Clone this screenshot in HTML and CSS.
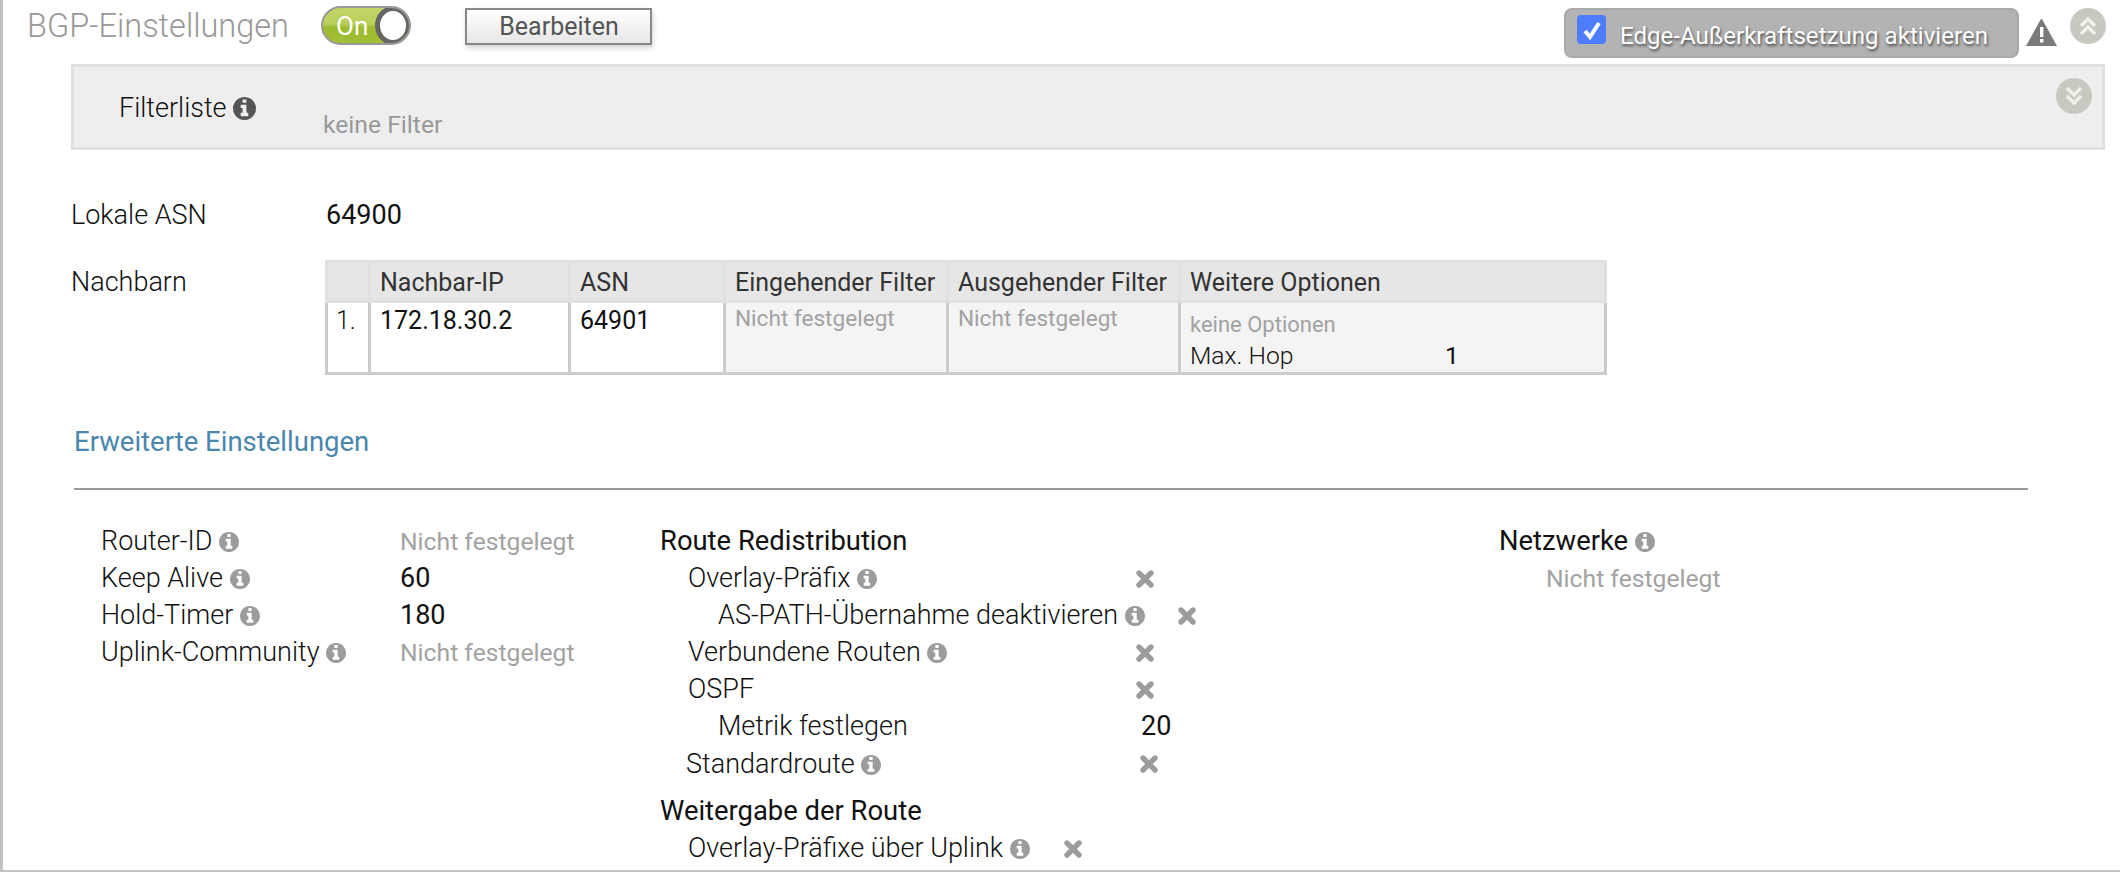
FILE: index.html
```html
<!DOCTYPE html>
<html lang="de">
<head>
<meta charset="utf-8">
<title>BGP-Einstellungen</title>
<link rel="stylesheet" href="styles.css">
</head>
<body>
<svg class="defs" width="0" height="0" aria-hidden="true">
  <symbol id="i-info" viewBox="0 0 1536 1536"><path d="M1024 1248v-160q0-14-9-23t-23-9h-96v-512q0-14-9-23t-23-9h-320q-14 0-23 9t-9 23v160q0 14 9 23t23 9h96v320h-96q-14 0-23 9t-9 23v160q0 14 9 23t23 9h448q14 0 23-9t9-23zm-128-896v-160q0-14-9-23t-23-9h-192q-14 0-23 9t-9 23v160q0 14 9 23t23 9h192q14 0 23-9t9-23zm640 416q0 209-103 385.5t-279.5 279.5-385.5 103-385.5-103-279.5-279.5-103-385.5 103-385.5 279.5-279.5 385.5-103 385.5 103 279.5 279.5 103 385.5z"/></symbol>
  <symbol id="i-x" viewBox="0 0 20 20"><path d="M4 4l12 12M16 4L4 16" fill="none" stroke="currentColor" stroke-width="5.4" stroke-linecap="round"/></symbol>
</svg>
<main class="page">
  <header class="top">
    <h1 class="title">BGP-Einstellungen</h1>
    <div class="toggle"><span class="toggle-label">On</span><span class="knob"></span></div>
    <button class="btn" type="button">Bearbeiten</button>
    <div class="override">
      <span class="check"><svg viewBox="0 0 24 24" width="24" height="24"><path d="M5 13l5 6 9-14" fill="none" stroke="#fff" stroke-width="4"/></svg></span>
      <span class="override-text">Edge-Außerkraftsetzung aktivieren</span>
    </div>
    <svg class="warn" viewBox="0 0 31 28" width="31" height="28"><path d="M15.5 1L30.5 28H.5z" fill="#7a7a7a" stroke="#7a7a7a" stroke-linejoin="round"/><path d="M14 9h3.4v10H14zM14 21h3.4v3.6H14z" fill="#fff"/></svg>
    <span class="round"><svg viewBox="0 0 24 24" width="24" height="24"><path d="M5 12l7-7 7 7M5 20l7-7 7 7" fill="none" stroke="#f1f1ec" stroke-width="3.5"/></svg></span>
  </header>

  <section class="filter">
    <div class="filter-label">Filterliste <svg class="info info-dark"><use href="#i-info"/></svg></div>
    <div class="filter-value">keine Filter</div>
    <span class="round round-down"><svg viewBox="0 0 24 24" width="24" height="24"><path d="M5 4l7 7 7-7M5 12l7 7 7-7" fill="none" stroke="#f1f1ec" stroke-width="3.5"/></svg></span>
  </section>

  <section class="basic">
    <div class="field">Lokale ASN</div>
    <div class="val">64900</div>
    <div class="field neighbors-label">Nachbarn</div>
    <table class="grid">
      <colgroup><col class="c1"><col class="c2"><col class="c3"><col class="c4"><col class="c5"><col class="c6"></colgroup>
      <thead>
        <tr><th></th><th>Nachbar-IP</th><th>ASN</th><th>Eingehender Filter</th><th>Ausgehender Filter</th><th>Weitere Optionen</th></tr>
      </thead>
      <tbody>
        <tr>
          <td class="idx">1.</td><td>172.18.30.2</td><td>64901</td>
          <td class="off muted">Nicht festgelegt</td>
          <td class="off muted">Nicht festgelegt</td>
          <td class="off">
            <div class="muted opt-none">keine Optionen</div>
            <div class="opt-row"><span class="opt-name">Max. Hop</span><span>1</span></div>
          </td>
        </tr>
      </tbody>
    </table>
  </section>

  <h2 class="adv-title">Erweiterte Einstellungen</h2>
  <hr class="rule">

  <section class="adv">
    <div class="col-a">
      <div class="lbl">Router-ID <svg class="info"><use href="#i-info"/></svg></div><div class="muted-l">Nicht festgelegt</div>
      <div class="lbl">Keep Alive <svg class="info"><use href="#i-info"/></svg></div><div class="num">60</div>
      <div class="lbl">Hold-Timer <svg class="info"><use href="#i-info"/></svg></div><div class="num">180</div>
      <div class="lbl">Uplink-Community <svg class="info"><use href="#i-info"/></svg></div><div class="muted-l">Nicht festgelegt</div>
    </div>
    <div class="col-b">
      <div class="head">Route Redistribution</div>
      <div class="row ind1"><span class="lbl lbl-w1">Overlay-Präfix <svg class="info"><use href="#i-info"/></svg></span><svg class="x"><use href="#i-x"/></svg></div>
      <div class="row ind2"><span class="lbl lbl-w2">AS-PATH-Übernahme deaktivieren <svg class="info"><use href="#i-info"/></svg></span><svg class="x"><use href="#i-x"/></svg></div>
      <div class="row ind1"><span class="lbl lbl-w1">Verbundene Routen <svg class="info"><use href="#i-info"/></svg></span><svg class="x"><use href="#i-x"/></svg></div>
      <div class="row ind1"><span class="lbl lbl-w1">OSPF</span><svg class="x"><use href="#i-x"/></svg></div>
      <div class="row ind2"><span class="lbl lbl-w3">Metrik festlegen</span><span class="num">20</span></div>
      <div class="row ind0"><span class="lbl lbl-w4">Standardroute <svg class="info"><use href="#i-info"/></svg></span><svg class="x"><use href="#i-x"/></svg></div>
      <div class="head head-2">Weitergabe der Route</div>
      <div class="row ind1"><span class="lbl lbl-w5">Overlay-Präfixe über Uplink <svg class="info"><use href="#i-info"/></svg></span><svg class="x"><use href="#i-x"/></svg></div>
    </div>
    <div class="col-c">
      <div class="head">Netzwerke <svg class="info"><use href="#i-info"/></svg></div>
      <div class="muted-l net-none">Nicht festgelegt</div>
    </div>
  </section>
</main>
</body>
</html>
```
FILE: styles.css
```css
* { box-sizing: border-box; }
html, body { margin: 0; padding: 0; }
body {
  width: 2120px;
  height: 872px;
  overflow: hidden;
  background: #fff;
  font-family: Roboto, "Liberation Sans", sans-serif;
  color: #111;
}
.defs { position: absolute; }
.page {
  height: 872px;
  border-left: 3px solid #c2c2c2;
  border-bottom: 2px solid #c2c2c2;
  padding-left: 24px;
  overflow: hidden;
}

/* top bar */
.top {
  display: flex;
  align-items: flex-start;
  height: 64px;
}
.title {
  margin: 7px 0 0;
  width: 294px;
  font-size: 32.5px;
  line-height: 38px;
  font-weight: 300;
  color: #999;
  white-space: nowrap;
}
.toggle {
  position: relative;
  width: 90px;
  height: 39px;
  margin-top: 6px;
  border: 2px solid #9a9a9a;
  border-radius: 20px;
  background: linear-gradient(#c3d568 0, #b9cf5c 45%, #9dbb2e 55%, #a2bf35 100%);
  overflow: hidden;
}
.toggle-label {
  position: absolute;
  left: 13px;
  top: 4px;
  color: #fff;
  font-size: 26px;
  line-height: 28px;
}
.knob {
  position: absolute;
  right: -2px;
  top: -2px;
  width: 36px;
  height: 39px;
  border: 5px solid #666;
  border-radius: 50%;
  background: #fff;
}
.btn {
  width: 187px;
  height: 37px;
  margin: 8px 0 0 54px;
  padding: 0 0 0 1px;
  border: 2px solid #888;
  background: linear-gradient(#fff, #e6e6e6);
  box-shadow: 1px 3px 5px rgba(0,0,0,.18);
  color: #555;
  font-family: inherit;
  font-size: 25px;
  line-height: 34px;
}
.override {
  display: flex;
  align-items: flex-start;
  width: 455px;
  height: 50px;
  margin: 8px 0 0 912px;
  padding: 5px 0 0 11px;
  background: #b3b3b3;
  border: 2px solid #a9a9a9;
  border-radius: 8px;
}
.check {
  display: flex;
  align-items: center;
  justify-content: center;
  width: 29px;
  height: 29px;
  background: #4d7cff;
  border-radius: 4px;
}
.override-text {
  margin: 6px 0 0 14px;
  color: #fff;
  font-size: 24.1px;
  line-height: 30px;
  white-space: nowrap;
  text-shadow: 1px 2px 3px rgba(0,0,0,.6);
}
.warn { margin: 18px 0 0 7px; flex: none; }
.round {
  display: flex;
  align-items: center;
  justify-content: center;
  flex: none;
  width: 36px;
  height: 36px;
  border-radius: 50%;
  background: #c8c8c0;
  margin: 8px 0 0 13px;
}

/* filter */
.filter {
  position: relative;
  width: 2034px;
  height: 86px;
  margin-left: 44px;
  background: #eee;
  border: 3px solid #e0e0e0;
}
.filter-label {
  position: absolute;
  left: 45px;
  top: 24px;
  font-size: 27px;
  line-height: 34px;
  font-weight: 300;
  display: flex;
  align-items: center;
  gap: 6px;
}
.filter-value {
  position: absolute;
  left: 249px;
  top: 43px;
  font-size: 24.7px;
  line-height: 30px;
  color: #999;
}
.round-down {
  position: absolute;
  left: 1982px;
  top: 11px;
  margin: 0;
}
.info {
  width: 20px;
  height: 20px;
  fill: #9c9c9c;
  flex: none;
  vertical-align: -2px;
}
.info-dark {
  width: 23px;
  height: 23px;
  fill: #555;
}

/* basic */
.basic {
  display: grid;
  grid-template-columns: 255px 1fr;
  padding: 47px 0 0 44px;
  font-size: 27px;
}
.field { font-weight: 300; line-height: 36px; }
.val { line-height: 36px; }
.neighbors-label { margin-top: 31px; }
.grid {
  margin: 27px 0 0 -1px;
  width: 1279px;
  table-layout: fixed;
  border-collapse: collapse;
}
.c1 { width: 43px; }
.c2 { width: 200px; }
.c3 { width: 155px; }
.c4 { width: 223px; }
.c5 { width: 232px; }
.c6 { width: 426px; }
.grid th {
  height: 40px;
  padding: 2px 0 0 9px;
  background: #e6e6e6;
  border: 3px solid #e0e0e0;
  font-size: 25px;
  font-weight: 400;
  text-align: left;
  color: #333;
  white-space: nowrap;
}
.grid td {
  height: 70px;
  padding: 2px 0 0 9px;
  border: 3px solid #ccc;
  vertical-align: top;
  font-size: 25px;
  line-height: 32px;
}
.grid td.idx { padding-left: 8px; font-weight: 300; }
.grid td.off { background: #f4f4f4; }
.grid td.muted { font-size: 22.6px; line-height: 30px; color: #a2a2a2; padding-top: 1px; }
.muted { color: #a2a2a2; }
.opt-none { font-size: 22px; line-height: 30px; margin-top: 5px; }
.opt-row { display: flex; font-size: 24.7px; line-height: 32px; font-weight: 300; }
.opt-row span:last-child { font-weight: 400; }
.opt-name { width: 255px; }

/* advanced */
.adv-title {
  margin: 49px 0 0 47px;
  font-size: 27.5px;
  line-height: 36px;
  font-weight: 400;
  color: #4a86ad;
}
.rule {
  width: 1954px;
  height: 2px;
  margin: 28px 0 0 47px;
  border: 0;
  background: #999;
}
.adv {
  display: flex;
  font-size: 27px;
  line-height: 37.1px;
  padding-top: 33px;
}
.col-a {
  display: grid;
  grid-template-columns: 299px auto;
  align-content: start;
  width: 559px;
  margin-left: 74px;
}
.col-b { width: 839px; }
.col-c { }
.lbl { font-weight: 300; white-space: nowrap; }
.num { font-weight: 400; }
.muted-l { color: #a2a2a2; font-size: 24.7px; }
.head { font-weight: 400; white-space: nowrap; font-size: 27.4px; }
.head-2 { margin-top: 10.5px; }
.row { display: flex; align-items: center; height: 37.1px; white-space: nowrap; }
.ind0 { padding-left: 26px; }
.ind1 { padding-left: 28px; }
.ind2 { padding-left: 58px; }
.lbl-w1 { width: 447px; }
.lbl-w2 { width: 459px; }
.lbl-w3 { width: 423px; }
.lbl-w4 { width: 453px; }
.lbl-w5 { width: 375px; }
.x { width: 20px; height: 20px; color: #9c9c9c; flex: none; }
.net-none { margin-left: 47px; }
```
